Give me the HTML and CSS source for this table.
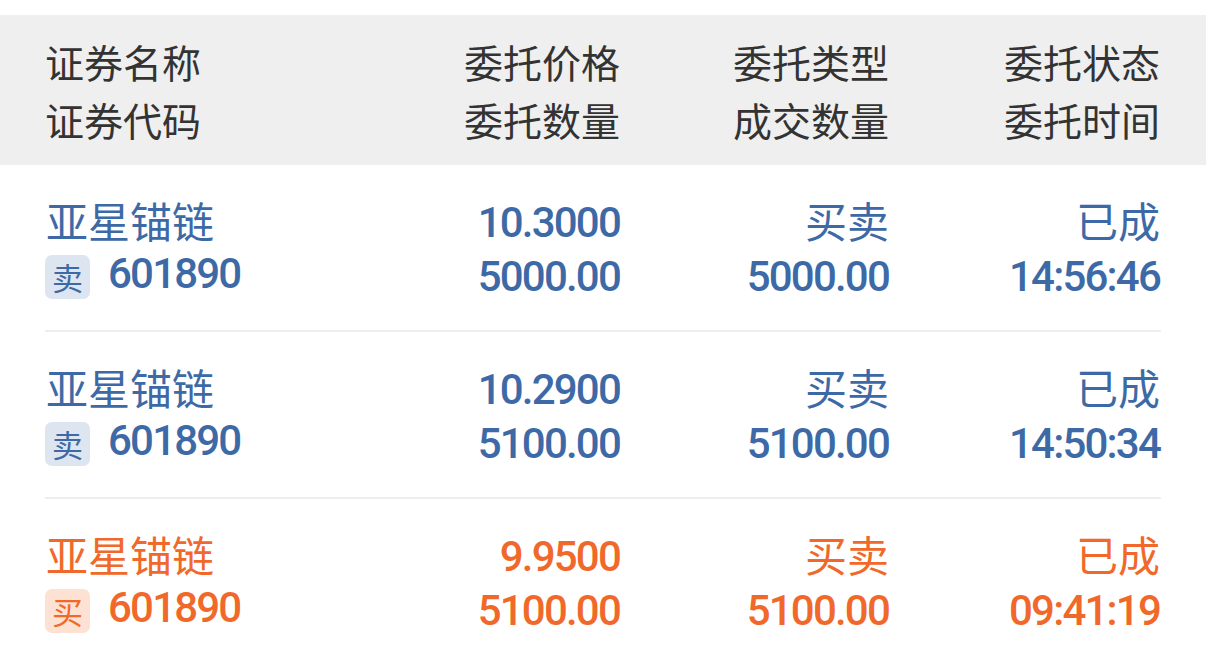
FILE: index.html
```html
<!DOCTYPE html>
<html lang="zh-CN">
<head>
<meta charset="utf-8">
<link rel="stylesheet" href="styles.css">
</head>
<body>
<div class="page">
  <div class="head">
    <div class="cell left"><div class="ln">证券名称</div><div class="ln">证券代码</div></div>
    <div class="cell"><div class="ln">委托价格</div><div class="ln">委托数量</div></div>
    <div class="cell"><div class="ln">委托类型</div><div class="ln">成交数量</div></div>
    <div class="cell"><div class="ln">委托状态</div><div class="ln">委托时间</div></div>
  </div>

  <div class="row sell">
    <div class="cell left"><div class="ln cn">亚星锚链</div><div class="ln code"><span class="badge">卖</span><span class="num">601890</span></div></div>
    <div class="cell"><div class="ln num">10.3000</div><div class="ln num">5000.00</div></div>
    <div class="cell"><div class="ln cn">买卖</div><div class="ln num">5000.00</div></div>
    <div class="cell"><div class="ln cn">已成</div><div class="ln num">14:56:46</div></div>
  </div>

  <div class="row sell">
    <div class="cell left"><div class="ln cn">亚星锚链</div><div class="ln code"><span class="badge">卖</span><span class="num">601890</span></div></div>
    <div class="cell"><div class="ln num">10.2900</div><div class="ln num">5100.00</div></div>
    <div class="cell"><div class="ln cn">买卖</div><div class="ln num">5100.00</div></div>
    <div class="cell"><div class="ln cn">已成</div><div class="ln num">14:50:34</div></div>
  </div>

  <div class="row buy last">
    <div class="cell left"><div class="ln cn">亚星锚链</div><div class="ln code"><span class="badge">买</span><span class="num">601890</span></div></div>
    <div class="cell"><div class="ln num">9.9500</div><div class="ln num">5100.00</div></div>
    <div class="cell"><div class="ln cn">买卖</div><div class="ln num">5100.00</div></div>
    <div class="cell"><div class="ln cn">已成</div><div class="ln num">09:41:19</div></div>
  </div>
</div>
</body>
</html>
```
FILE: styles.css
```css
* { box-sizing: border-box; margin: 0; padding: 0; }
html, body { background: #ffffff; }
body {
  font-family: "Noto Sans CJK SC", "Noto Sans", sans-serif;
  width: 1206px;
  height: 662px;
  overflow: hidden;
}
.page { padding-top: 15px; }

.head, .row {
  display: grid;
  grid-template-columns: 1fr 269px 269px 271px;
}

.head {
  background: #efefef;
  height: 150px;
  padding: 17px 46px 0 45px;
  color: #333333;
  font-size: 39px;
}
.head .ln { height: 58px; line-height: 58px; }

.cell { display: flex; flex-direction: column; align-items: flex-end; }
.cell.left { align-items: flex-start; }

.row {
  margin: 0 45px;
  padding: 28px 1px 29px 1px;
  border-bottom: 2px solid #eeeeee;
}
.row.last { border-bottom: none; }
.row .ln { height: 54px; line-height: 54px; white-space: nowrap; }

.sell { color: #3d6aa6; }
.buy { color: #f0692a; }

.cn { font-size: 42px; }

.num {
  font-family: Roboto, "Noto Sans", sans-serif;
  font-weight: 500;
  font-size: 42px;
  letter-spacing: -1.8px;
}
.row .ln.num { padding-top: 3px; }

.code { display: flex; align-items: center; padding-top: 5px; }
.code .num { margin-left: 18px; margin-top: -6px; }

.badge {
  display: flex;
  align-items: center;
  justify-content: center;
  width: 45px;
  height: 44px;
  margin-left: -1px;
  border-radius: 7px;
  font-size: 31px;
  line-height: 44px;
}
.sell .badge { background: #dde5f1; }
.buy .badge { background: #fde2d4; }
```
